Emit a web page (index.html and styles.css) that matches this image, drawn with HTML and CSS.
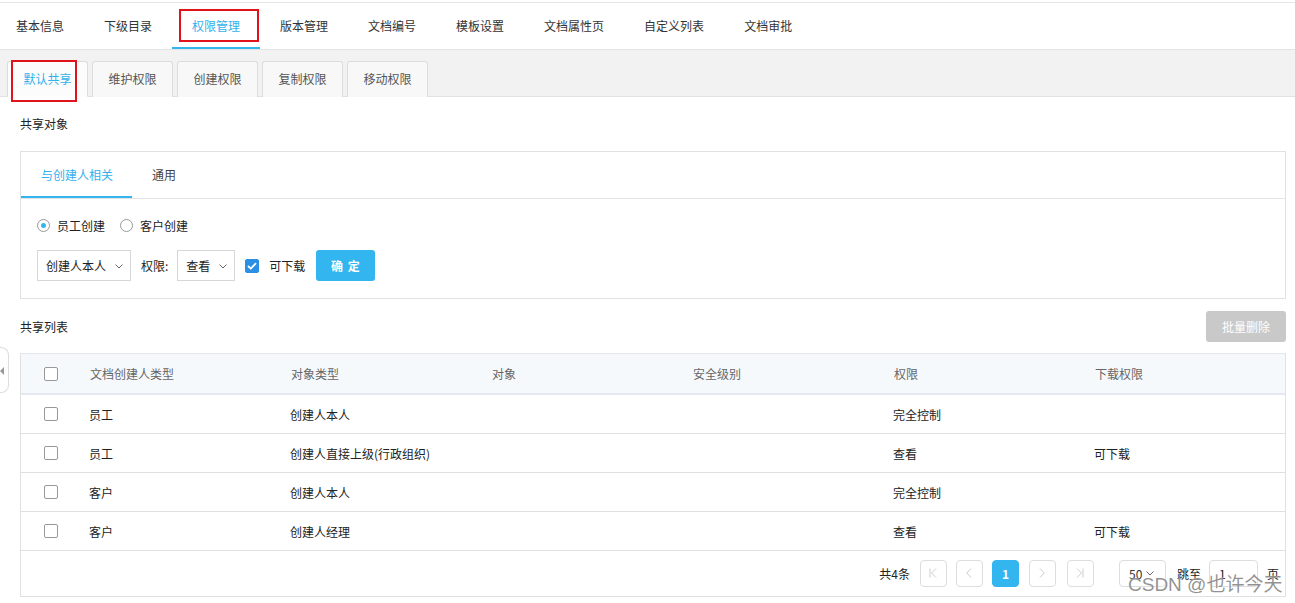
FILE: index.html
```html
<!DOCTYPE html>
<html lang="zh">
<head>
<meta charset="utf-8">
<link rel="stylesheet" href="styles.css">
</head>
<body>
<div class="page">
  <nav class="nav">
    <ul class="nav-list">
      <li class="nav-item">基本信息</li>
      <li class="nav-item">下级目录</li>
      <li class="nav-item active">权限管理</li>
      <li class="nav-item">版本管理</li>
      <li class="nav-item">文档编号</li>
      <li class="nav-item">模板设置</li>
      <li class="nav-item">文档属性页</li>
      <li class="nav-item">自定义列表</li>
      <li class="nav-item">文档审批</li>
    </ul>
  </nav>
  <div class="subtabs">
    <div class="subtab active">默认共享</div>
    <div class="subtab">维护权限</div>
    <div class="subtab">创建权限</div>
    <div class="subtab">复制权限</div>
    <div class="subtab">移动权限</div>
  </div>

  <main class="content">
    <div class="section-title first">共享对象</div>
    <div class="panel">
      <div class="panel-tabs">
        <div class="ptab active">与创建人相关</div>
        <div class="ptab">通用</div>
      </div>
      <div class="panel-body">
        <div class="radios">
          <label class="radio checked"><span class="radio-circle"></span>员工创建</label>
          <label class="radio"><span class="radio-circle"></span>客户创建</label>
        </div>
        <div class="form-row">
          <div class="select sel-wide"><span>创建人本人</span><svg class="chev" width="8" height="5" viewBox="0 0 8 5"><path d="M0.5 0.5L4 4L7.5 0.5" fill="none" stroke="#666" stroke-width="1"/></svg></div>
          <span class="label">权限:</span>
          <div class="select sel-narrow"><span>查看</span><svg class="chev" width="8" height="5" viewBox="0 0 8 5"><path d="M0.5 0.5L4 4L7.5 0.5" fill="none" stroke="#666" stroke-width="1"/></svg></div>
          <span class="checkbox checked"><svg width="10" height="8" viewBox="0 0 10 8"><path d="M1 4L3.8 6.6L9 1.2" fill="none" stroke="#fff" stroke-width="1.8"/></svg></span>
          <span class="cb-label">可下载</span>
          <button class="btn-primary">确 定</button>
        </div>
      </div>
    </div>

    <div class="list-head">
      <div class="section-title">共享列表</div>
      <button class="btn-disabled">批量删除</button>
    </div>

    <div class="table">
      <div class="tr th">
        <div class="td cb-cell"><span class="checkbox"></span></div>
        <div class="td">文档创建人类型</div>
        <div class="td">对象类型</div>
        <div class="td">对象</div>
        <div class="td">安全级别</div>
        <div class="td">权限</div>
        <div class="td">下载权限</div>
      </div>
      <div class="tr">
        <div class="td cb-cell"><span class="checkbox"></span></div>
        <div class="td shift">员工</div>
        <div class="td shift">创建人本人</div>
        <div class="td"></div>
        <div class="td"></div>
        <div class="td shift">完全控制</div>
        <div class="td"></div>
      </div>
      <div class="tr">
        <div class="td cb-cell"><span class="checkbox"></span></div>
        <div class="td shift">员工</div>
        <div class="td shift">创建人直接上级(行政组织)</div>
        <div class="td"></div>
        <div class="td"></div>
        <div class="td shift">查看</div>
        <div class="td shift">可下载</div>
      </div>
      <div class="tr">
        <div class="td cb-cell"><span class="checkbox"></span></div>
        <div class="td shift">客户</div>
        <div class="td shift">创建人本人</div>
        <div class="td"></div>
        <div class="td"></div>
        <div class="td shift">完全控制</div>
        <div class="td"></div>
      </div>
      <div class="tr">
        <div class="td cb-cell"><span class="checkbox"></span></div>
        <div class="td shift">客户</div>
        <div class="td shift">创建人经理</div>
        <div class="td"></div>
        <div class="td"></div>
        <div class="td shift">查看</div>
        <div class="td shift">可下载</div>
      </div>
      <div class="pager">
        <span class="total">共4条</span>
        <span class="pbtn"><svg width="8" height="10" viewBox="0 0 8 10"><path d="M1 0.5V9.5M7 0.5L2.5 5L7 9.5" fill="none" stroke="#ccc" stroke-width="1"/></svg></span>
        <span class="pbtn"><svg width="6" height="10" viewBox="0 0 6 10"><path d="M5 0.5L0.8 5L5 9.5" fill="none" stroke="#ccc" stroke-width="1"/></svg></span>
        <span class="pbtn cur">1</span>
        <span class="pbtn next"><svg width="6" height="10" viewBox="0 0 6 10"><path d="M1 0.5L5.2 5L1 9.5" fill="none" stroke="#ccc" stroke-width="1"/></svg></span>
        <span class="pbtn last"><svg width="8" height="10" viewBox="0 0 8 10"><path d="M1 0.5L5.5 5L1 9.5M7 0.5V9.5" fill="none" stroke="#ccc" stroke-width="1"/></svg></span>
        <span class="psize">50<svg width="8" height="5" viewBox="0 0 8 5"><path d="M0.5 0.5L4 4L7.5 0.5" fill="none" stroke="#666" stroke-width="1"/></svg></span>
        <span class="jump">跳至</span>
        <span class="pinput">1</span>
        <span class="page-unit">页</span>
      </div>
    </div>
  </main>

  <div class="side-handle"><span class="tri"></span></div>
  <div class="mark mark-nav"></div>
  <div class="mark mark-sub"></div>
  <div class="watermark">CSDN @也许今天</div>
</div>
</body>
</html>
```
FILE: styles.css
```css
* { box-sizing: border-box; }
html, body { margin: 0; padding: 0; background: #fff; }
body {
  font-family: "Noto Sans CJK SC", "Liberation Sans", sans-serif;
  font-size: 12px;
  color: #333;
}
.page { position: relative; width: 1295px; height: 603px; overflow: hidden; padding-top: 2px; }

.nav { border-top: 1px solid #e6e6e6; border-bottom: 1px solid #e3e3e3; height: 48px; }
.nav-list { list-style: none; margin: 0 0 0 -4px; padding: 0; display: flex; height: 46px; }
.nav-item { padding: 0 20px; height: 46px; line-height: 46px; color: #333; white-space: nowrap; border-bottom: 2px solid transparent; }
.nav-item.active { color: #33b1ec; border-bottom-color: #33b5f0; }

.subtabs { background: #f2f2f2; height: 47px; border-bottom: 1px solid #e2e2e2; display: flex; align-items: flex-end; gap: 4px; padding-left: 7px; }
.subtab { width: 81px; height: 36px; margin-bottom: -1px; border: 1px solid #dcdcdc; border-bottom: none; border-radius: 3px 3px 0 0; background: #f8f8f8; color: #555; text-align: center; line-height: 34px; }
.subtab.active { background: #fcfcfc; color: #33b1ec; border-bottom: 1px solid #fcfcfc; }

.content { padding: 0 9px 0 20px; }
.section-title { color: #222; line-height: 16px; }
.section-title.first { margin-top: 19px; }

.panel { margin-top: 19px; border: 1px solid #e1e1e1; height: 148px; }
.panel-tabs { display: flex; height: 47px; border-bottom: 1px solid #e4e4e4; }
.ptab { padding: 0 19px 0 20px; line-height: 45px; color: #444; border-bottom: 2px solid transparent; }
.ptab.active { color: #33b1ec; border-bottom-color: #33b5f0; }
.panel-body { padding: 17px 16px 0 16px; }
.radios { display: flex; align-items: center; gap: 15px; height: 18px; color: #222; }
.radio { display: flex; align-items: center; gap: 7px; }
.radio-circle { width: 13px; height: 13px; border: 1px solid #999; border-radius: 50%; position: relative; background: #fff; }
.radio.checked .radio-circle::after { content: ""; position: absolute; left: 3px; top: 3px; width: 5px; height: 5px; border-radius: 50%; background: #33b5f0; }

.form-row { display: flex; align-items: center; margin-top: 16px; height: 31px; }
.select { height: 31px; border: 1px solid #d6d6d6; display: flex; align-items: center; justify-content: space-between; padding: 0 7px 0 8px; color: #222; background: #fff; }
.sel-wide { width: 94px; }
.sel-narrow { width: 58px; }
.chev { margin-top: 1px; }
.label { margin: 0 9px 0 10px; color: #222; }
.checkbox { width: 14px; height: 14px; border: 1px solid #999; border-radius: 2px; display: inline-flex; align-items: center; justify-content: center; background: #fff; }
.form-row .checkbox { margin-left: 10px; }
.checkbox.checked { background: #2b8fe3; border-color: #2b8fe3; }
.cb-label { margin-left: 10px; color: #222; }
.btn-primary { margin-left: 11px; width: 59px; height: 31px; border: none; border-radius: 3px; background: #33b5f0; color: #fff; font-family: inherit; font-size: 12px; font-weight: bold; letter-spacing: 1px; padding: 0; }

.list-head { display: flex; justify-content: space-between; align-items: center; margin-top: 12px; height: 31px; }
.btn-disabled { width: 80px; height: 31px; border: none; border-radius: 3px; background: #c9c9c9; color: #fff; font-family: inherit; font-size: 12px; padding: 0; }

.table { margin-top: 11px; border: 1px solid #e1e1e1; border-top-color: #e3e7ec; }
.tr { display: grid; grid-template-columns: 69px 201px 201px 201px 201px 201px 1fr; height: 39px; border-bottom: 1px solid #e0e0e0; align-items: center; color: #222; }
.th { height: 41px; background: #f6f9fc; border-bottom: 2px solid #e3e9ef; color: #666; }
.td { white-space: nowrap; }
.td.shift { margin-left: -1px; }
.cb-cell { padding-left: 23px; display: flex; }
.pager { height: 45px; display: flex; align-items: center; justify-content: flex-end; padding-right: 6px; padding-bottom: 1px; color: #222; }
.total { margin-right: 10px; }
.pbtn { width: 27px; height: 27px; border: 1px solid #ddd; border-radius: 4px; display: inline-flex; align-items: center; justify-content: center; margin-right: 9px; color: #fff; font-size: 12px; font-weight: bold; }
.pbtn.cur { background: #33b5f0; border-color: #33b5f0; margin-right: 10px; }
.pbtn.next { margin-right: 11px; }
.pbtn.last { margin-right: 25px; }
.psize { width: 47px; height: 27px; border: 1px solid #ddd; border-radius: 4px; display: inline-flex; align-items: center; gap: 4px; padding-left: 9px; color: #333; margin-right: 11px; }
.jump { margin-right: 8px; }
.pinput { width: 49px; height: 27px; border: 1px solid #ddd; border-radius: 4px; display: inline-flex; align-items: center; padding-left: 9px; margin-right: 9px; }

.side-handle { position: absolute; left: -1px; top: 347px; width: 10px; height: 46px; border: 1px solid #ddd; border-left: none; border-radius: 0 8px 8px 0; background: #fff; }
.tri { position: absolute; left: 1px; top: 19px; width: 0; height: 0; border-top: 4px solid transparent; border-bottom: 4px solid transparent; border-right: 4px solid #999; }

.mark { position: absolute; border: 2px solid #e0121b; pointer-events: none; }
.mark-nav { left: 179px; top: 9px; width: 80px; height: 33px; }
.mark-sub { left: 11px; top: 60px; width: 66px; height: 42px; }

.watermark { position: absolute; left: 1128px; top: 569px; font-family: "Liberation Sans", "Noto Sans CJK SC", sans-serif; font-size: 19px; color: rgba(110,110,110,0.75); text-shadow: 0 0 1px #fff; white-space: nowrap; }
```
